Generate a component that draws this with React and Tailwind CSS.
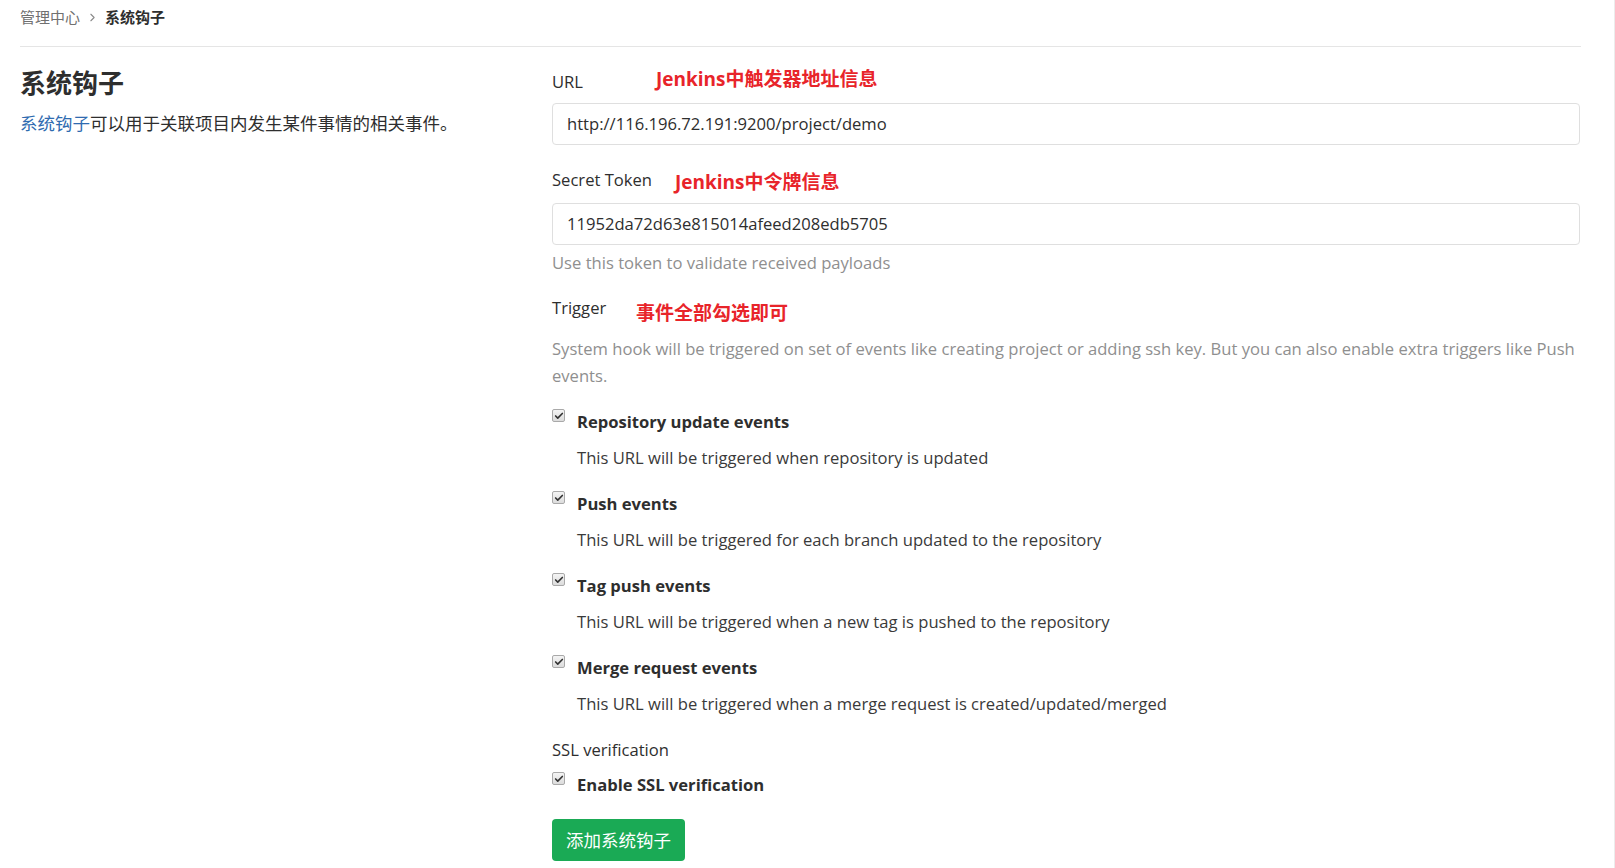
import { Check, ChevronRight } from 'lucide-react'

const font = 'font-["Open_Sans","Noto_Sans_CJK_SC",sans-serif]'

const triggers = [
  { label: 'Repository update events', help: 'This URL will be triggered when repository is updated' },
  { label: 'Push events', help: 'This URL will be triggered for each branch updated to the repository' },
  { label: 'Tag push events', help: 'This URL will be triggered when a new tag is pushed to the repository' },
  { label: 'Merge request events', help: 'This URL will be triggered when a merge request is created/updated/merged' },
]

const Box = () => (
  <span className="-mt-[1px] flex h-[13px] w-[13px] shrink-0 items-center justify-center rounded-[2px] border border-[#a9a9a9] bg-gradient-to-b from-[#f4f4f4] to-[#dcdcdc]">
    <Check size={10} strokeWidth={4} className="text-[#333]" />
  </span>
)

const Note = ({ children, className }) => (
  <span className={`text-[19px] leading-[24px] font-bold text-[#e8242a] ${className}`}>{children}</span>
)

const TriggerRow = ({ label, help, first }) => (
  <div className={first ? 'mt-[21px]' : 'mt-[22px]'}>
    <div className="flex items-start gap-[12px]">
      <Box />
      <span className="text-[16.6px] leading-[24px] font-bold text-[#2e2e2e]">{label}</span>
    </div>
    <p className="mt-[12px] pl-[25px] text-[16.6px] leading-[24px] text-[#3a3a3a]">{help}</p>
  </div>
)

export default function App() {
  return (
    <div className={`min-h-screen border-r border-[#ececec] bg-white ${font}`}>
      <div className="pl-5 pr-[33px]">
        <div className="flex h-[47px] items-start border-b border-[#e5e5e5] pt-[6px] text-[15px] leading-[22px]">
          <span className="text-[#707070]">管理中心</span>
          <ChevronRight size={13} className="mx-[6px] mt-[5px] text-[#8a8a8a]" />
          <span className="font-bold text-[#2e2e2e]">系统钩子</span>
        </div>
      </div>

      <div className="flex pl-5 pr-[34px]">
        <div className="w-[532px] shrink-0">
          <h2 className="mt-[20px] text-[26px] leading-[32px] font-bold text-[#2e2e2e]">系统钩子</h2>
          <p className="mt-[11px] text-[17.5px] leading-[26px] text-[#2e2e2e]">
            <a className="text-[#2f6bb0]">系统钩子</a>可以用于关联项目内发生某件事情的相关事件。
          </p>
        </div>

        <div className="flex-1">
          <div className="mt-[23px] flex h-[24px] items-center">
            <span className="w-[104px] text-[16.6px] leading-[24px] text-[#2e2e2e]">URL</span>
            <Note className="-translate-y-[3px]">Jenkins中触发器地址信息</Note>
          </div>
          <div className="mt-[9px] flex h-[42px] items-center rounded-[4px] border border-[#dfdfdf] px-[14px] text-[16.6px] text-[#2e2e2e]">
            http://116.196.72.191:9200/project/demo
          </div>

          <div className="mt-[23px] flex h-[24px] items-center">
            <span className="w-[123px] text-[16.6px] leading-[24px] text-[#2e2e2e]">Secret Token</span>
            <Note className="translate-y-[2px]">Jenkins中令牌信息</Note>
          </div>
          <div className="mt-[11px] flex h-[42px] items-center rounded-[4px] border border-[#dfdfdf] px-[14px] text-[16.6px] text-[#2e2e2e]">
            11952da72d63e815014afeed208edb5705
          </div>
          <p className="mt-[6px] text-[16.6px] leading-[24px] text-[#8f8f8f]">Use this token to validate received payloads</p>

          <div className="mt-[21px] flex h-[24px] items-center">
            <span className="w-[84px] text-[16.6px] leading-[24px] text-[#2e2e2e]">Trigger</span>
            <Note className="translate-y-[5px]">事件全部勾选即可</Note>
          </div>
          <p className="mt-[15px] text-[16.6px] leading-[27px] text-[#8f8f8f]">
            System hook will be triggered on set of events like creating project or adding ssh key. But you can also enable extra triggers like Push events.
          </p>

          {triggers.map((t, i) => (
            <TriggerRow key={t.label} label={t.label} help={t.help} first={i === 0} />
          ))}

          <p className="mt-[22px] text-[16.6px] leading-[24px] text-[#2e2e2e]">SSL verification</p>
          <div className="mt-[11px] flex items-start gap-[12px]">
            <Box />
            <span className="text-[16.6px] leading-[24px] font-bold text-[#2e2e2e]">Enable SSL verification</span>
          </div>

          <button
            type="button"
            className="mt-[22px] h-[42px] rounded-[4px] bg-[#1aaa55] px-[14px] text-[17.5px] text-white"
          >
            添加系统钩子
          </button>
        </div>
      </div>
    </div>
  )
}
